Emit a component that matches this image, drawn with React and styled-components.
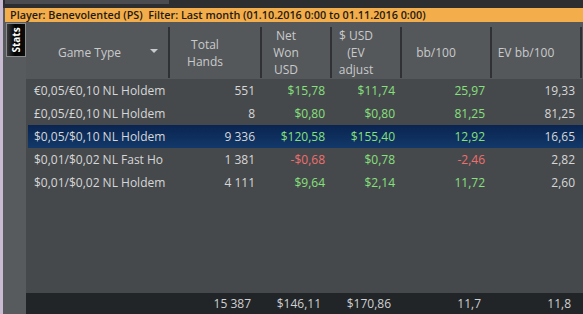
import styled, { createGlobalStyle } from "styled-components";

const GlobalStyle = createGlobalStyle`
  html, body {
    margin: 0;
    padding: 0;
    background: #2c2e30;
  }
  * {
    box-sizing: border-box;
  }
`;

const COLS = "144px 92px 70px 70px 90px 90px";

const rows = [
  { game: "€0,05/€0,10 NL Holdem", hands: "551", net: "$15,78", ev: "$11,74", bb: "25,97", evbb: "19,33", netTone: "pos", bbTone: "pos" },
  { game: "£0,05/£0,10 NL Holdem", hands: "8", net: "$0,80", ev: "$0,80", bb: "81,25", evbb: "81,25", netTone: "pos", bbTone: "pos" },
  { game: "$0,05/$0,10 NL Holdem", hands: "9 336", net: "$120,58", ev: "$155,40", bb: "12,92", evbb: "16,65", netTone: "pos", bbTone: "pos", selected: true },
  { game: "$0,01/$0,02 NL Fast Ho", hands: "1 381", net: "-$0,68", ev: "$0,78", bb: "-2,46", evbb: "2,82", netTone: "neg", bbTone: "neg" },
  { game: "$0,01/$0,02 NL Holdem", hands: "4 111", net: "$9,64", ev: "$2,14", bb: "11,72", evbb: "2,60", netTone: "pos", bbTone: "pos" },
];

function App() {
  return (
    <>
      <GlobalStyle />
      <Window>
        <TopStrip>
          <TabSlot />
        </TopStrip>
        <FilterBar>
          Player: Benevolented (PS)&nbsp;&nbsp;Filter: Last month (01.10.2016 0:00 to 01.11.2016 0:00)
        </FilterBar>
        <Body>
          <SidePanel>
            <StatsTab>
              <span>Stats</span>
            </StatsTab>
          </SidePanel>
          <Grid>
            <Header>
              <HeadCell $pad="15px">
                Game Type
                <SortArrow />
              </HeadCell>
              <HeadCell>
                Total
                <br />
                Hands
              </HeadCell>
              <HeadCell>
                Net
                <br />
                Won
                <br />
                USD
              </HeadCell>
              <HeadCell>
                $ USD
                <br />
                (EV
                <br />
                adjust
              </HeadCell>
              <HeadCell>bb/100</HeadCell>
              <HeadCell>EV bb/100</HeadCell>
            </Header>
            <Rows>
              {rows.map((r) => (
                <Row key={r.game} $selected={r.selected}>
                  <GameCell>{r.game}</GameCell>
                  <NumCell>{r.hands}</NumCell>
                  <NumCell $tone={r.netTone}>{r.net}</NumCell>
                  <NumCell $tone="pos">{r.ev}</NumCell>
                  <NumCell $tone={r.bbTone}>{r.bb}</NumCell>
                  <NumCell>{r.evbb}</NumCell>
                </Row>
              ))}
            </Rows>
            <Footer>
              <FootCell />
              <FootCell>15 387</FootCell>
              <FootCell>$146,11</FootCell>
              <FootCell>$170,86</FootCell>
              <FootCell>11,7</FootCell>
              <FootCell>11,8</FootCell>
            </Footer>
          </Grid>
        </Body>
      </Window>
    </>
  );
}
export default App;

const Window = styled.div`
  width: 583px;
  height: 314px;
  display: flex;
  flex-direction: column;
  border-left: 3px solid #c9bcd2;
  background: #585b5e;
  font-family: "Open Sans", "Noto Sans", sans-serif;
  overflow: hidden;
`;

const TopStrip = styled.div`
  height: 8px;
  background: #2c2e30;
  display: flex;
`;

const TabSlot = styled.div`
  width: 164px;
  margin-left: 2px;
  height: 4px;
  background: #4a4c4f;
`;

const FilterBar = styled.div`
  height: 14px;
  margin-left: 2px;
  background: #f3ad4b;
  color: #1f1a12;
  font-size: 10.8px;
  font-weight: 600;
  line-height: 14px;
  padding-left: 5px;
  white-space: nowrap;
  overflow: hidden;
`;

const Body = styled.div`
  flex: 1;
  display: flex;
  min-height: 0;
`;

const SidePanel = styled.div`
  width: 23px;
  background: #585b5e;
  padding: 1px 0 0 3px;
`;

const StatsTab = styled.div`
  width: 20px;
  height: 34px;
  border: 1px solid #8a8c8e;
  background: linear-gradient(to right, #3a3a3a, #000 45%, #0c0c0c);
  display: flex;
  align-items: center;
  justify-content: center;

  span {
    transform: rotate(-90deg);
    color: #fff;
    font-size: 10px;
    font-weight: 700;
    white-space: nowrap;
  }
`;

const Grid = styled.div`
  flex: 1;
  display: flex;
  flex-direction: column;
`;

const Header = styled.div`
  height: 57px;
  display: grid;
  grid-template-columns: ${COLS};
  background: #55585b;
  padding: 5px 0 4px;
`;

const HeadCell = styled.div`
  display: flex;
  align-items: center;
  justify-content: center;
  text-align: center;
  padding-right: ${(p) => p.$pad || "20px"};
  border-right: 2px solid #2f3134;
  color: #c9cacb;
  font-size: 12px;
  line-height: 17px;
  position: relative;
`;

const SortArrow = styled.span`
  position: absolute;
  right: 10px;
  top: 22px;
  width: 0;
  height: 0;
  border-left: 4px solid transparent;
  border-right: 4px solid transparent;
  border-top: 4px solid #c9cacb;
`;

const Rows = styled.div`
  flex: 1;
  background: #46494c;
`;

const Row = styled.div`
  display: grid;
  grid-template-columns: ${COLS};
  height: 23px;
  align-items: center;
  font-size: 12px;
  margin-left: 2px;
  margin-right: -2px;
  background: ${(p) =>
    p.$selected ? "linear-gradient(to bottom, #0a2450, #12396a)" : "transparent"};
`;

const GameCell = styled.div`
  padding-left: 6px;
  color: #d6d7d8;
  white-space: nowrap;
  overflow: hidden;
`;

const toneColor = { pos: "#86e07c", neg: "#ef6f6c" };

const NumCell = styled.div`
  text-align: right;
  padding-right: 9px;
  color: ${(p) => toneColor[p.$tone] || "#d6d7d8"};
  white-space: nowrap;
`;

const Footer = styled.div`
  height: 21px;
  display: grid;
  grid-template-columns: ${COLS};
  align-items: center;
  background: #222528;
  font-size: 12px;
`;

const FootCell = styled.div`
  text-align: right;
  padding-right: 11px;
  color: #cfd0d1;
  white-space: nowrap;
`;
